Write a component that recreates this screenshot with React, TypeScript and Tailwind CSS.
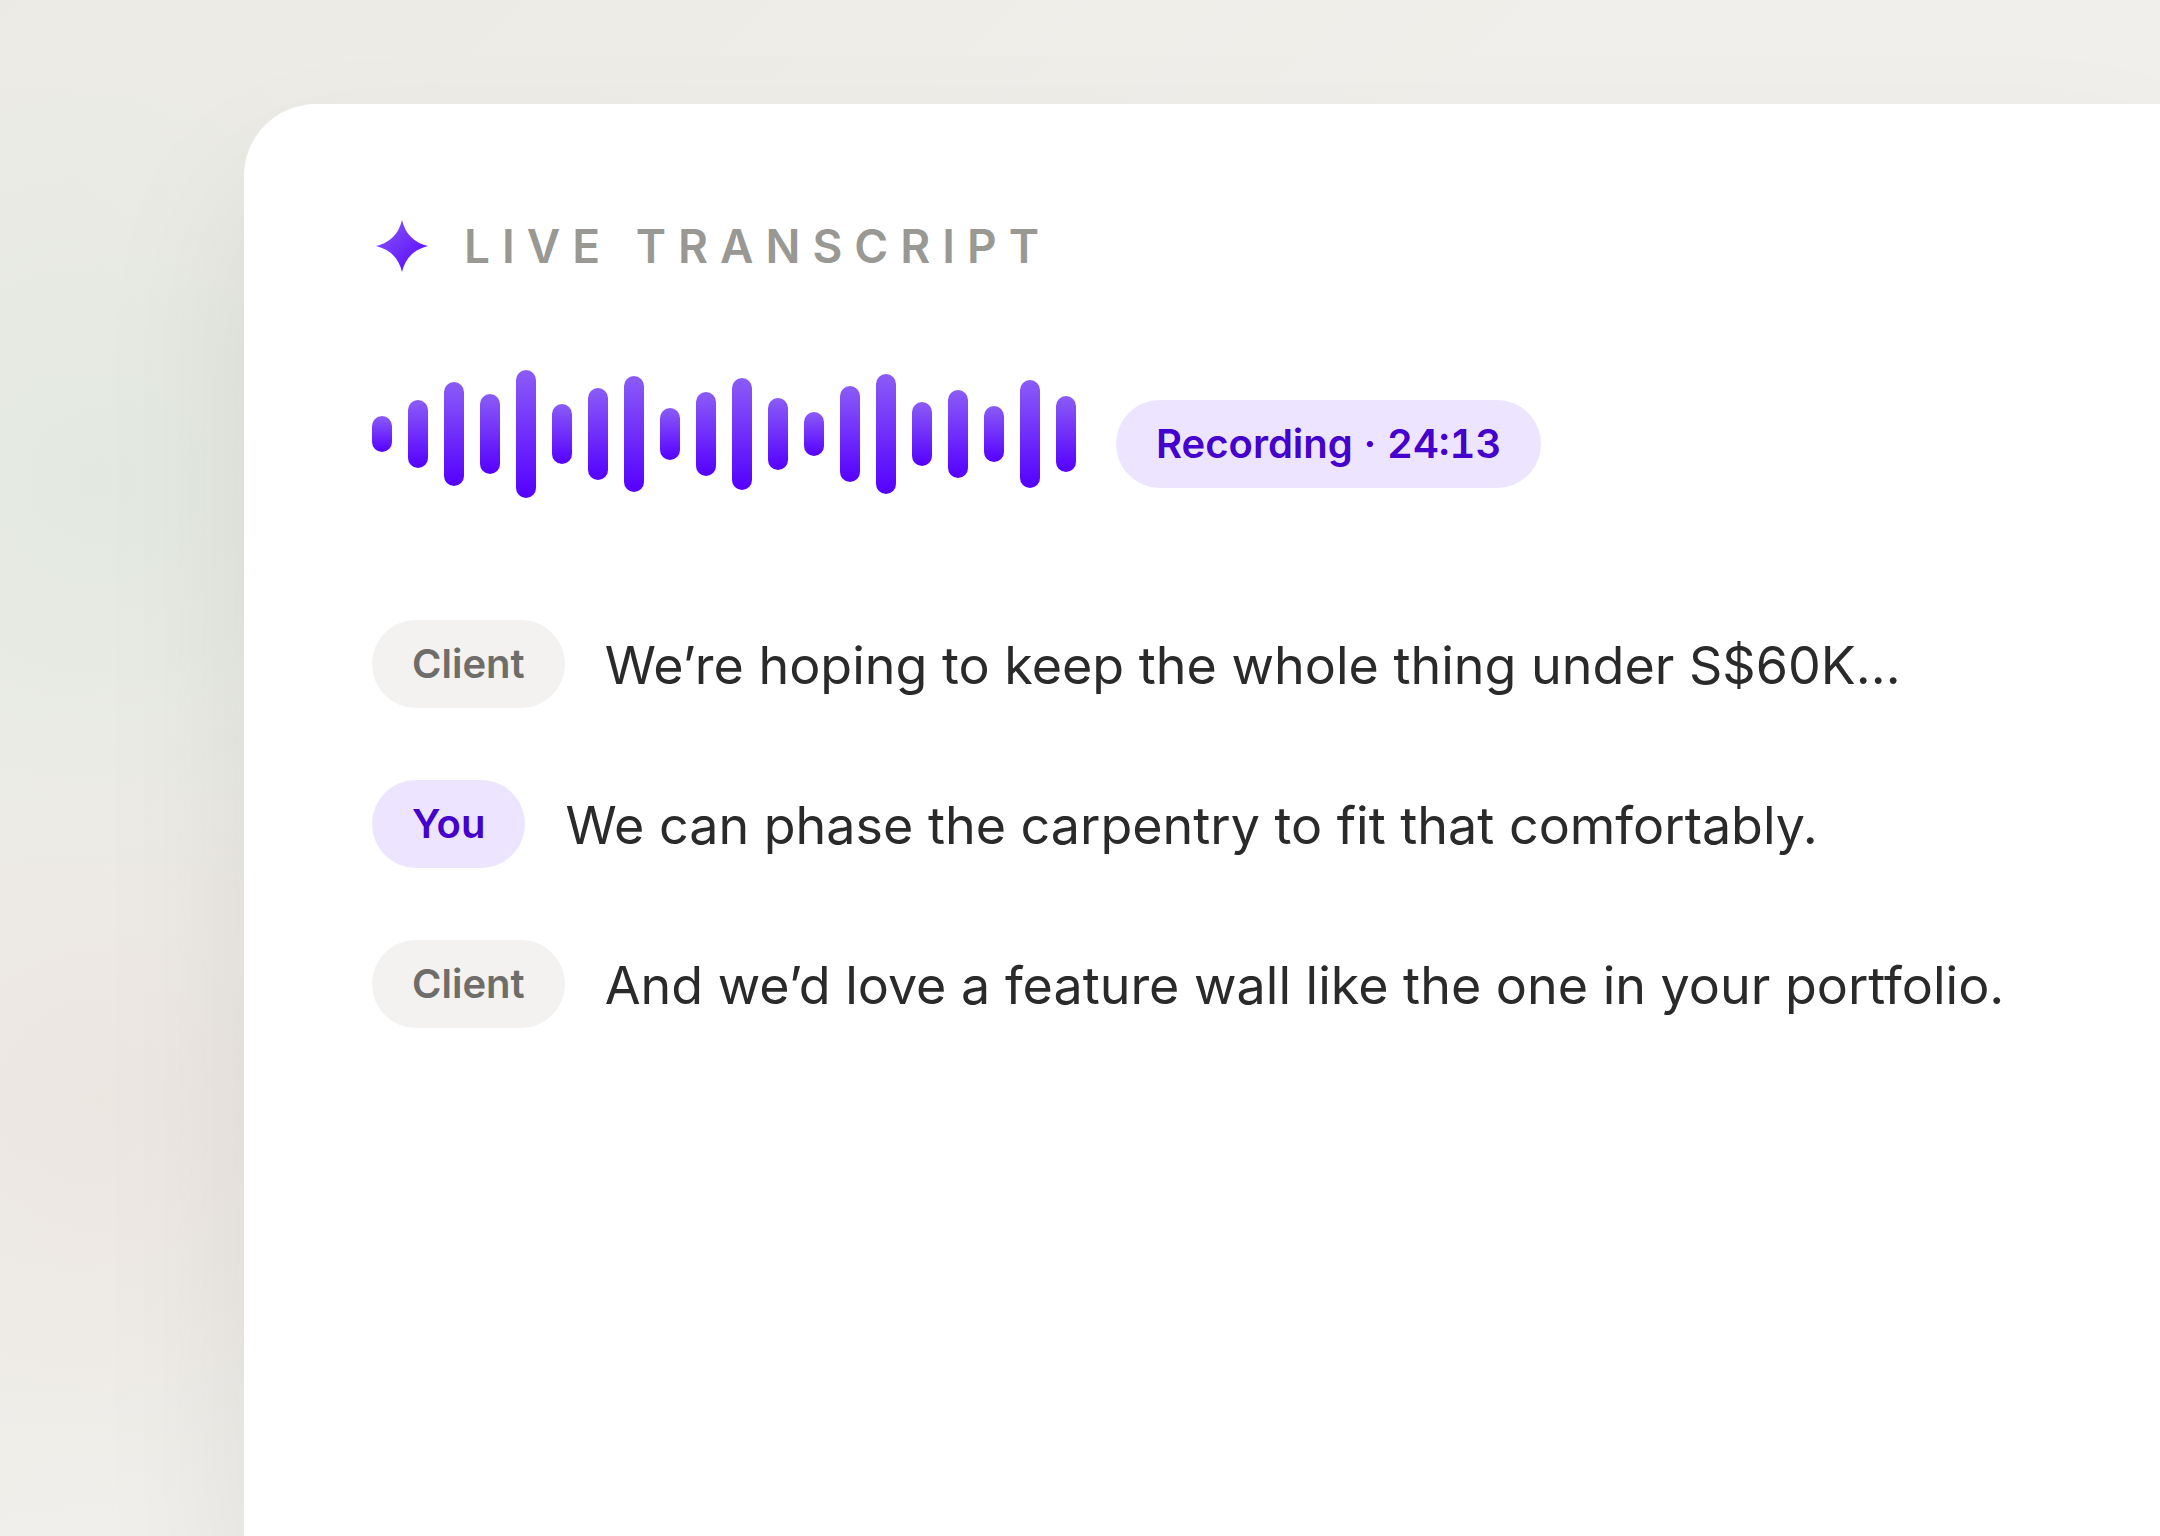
import type { ReactNode } from "react";

const barHeights = [36, 68, 104, 80, 128, 60, 92, 116, 52, 84, 112, 72, 44, 96, 120, 64, 88, 56, 108, 76];

type Speaker = "Client" | "You";

const lines: { speaker: Speaker; text: string }[] = [
  { speaker: "Client", text: "We’re hoping to keep the whole thing under S$60K…" },
  { speaker: "You", text: "We can phase the carpentry to fit that comfortably." },
  { speaker: "Client", text: "And we’d love a feature wall like the one in your portfolio." },
];

const chipStyles: Record<Speaker, string> = {
  Client: "bg-[#f3f2f0] text-[#6e6d69]",
  You: "bg-[#ede5ff] text-[#4400cc]",
};

function Sparkle() {
  return (
    <svg viewBox="0 0 60 60" className="size-[60px] shrink-0" aria-hidden="true">
      <defs>
        <linearGradient id="sparkle" x1="0" y1="0" x2="1" y2="1">
          <stop offset="0" stopColor="#8b5cf6" />
          <stop offset="1" stopColor="#5500ff" />
        </linearGradient>
      </defs>
      <path d="M30 4Q35 25 56 30Q35 35 30 56Q25 35 4 30Q25 25 30 4Z" fill="url(#sparkle)" />
    </svg>
  );
}

function Chip({ className, children }: { className: string; children: ReactNode }) {
  return (
    <span className={`flex h-[88px] shrink-0 items-center rounded-full px-10 text-[40px] font-semibold whitespace-nowrap tabular-nums ${className}`}>
      {children}
    </span>
  );
}

export default function App() {
  return (
    <main className="flex min-h-screen overflow-hidden bg-[radial-gradient(circle_420px_at_100px_480px,#e3e9e0_0%,#e3e9e0a0_40%,#e3e9e030_75%,#e3e9e000_100%),radial-gradient(circle_420px_at_100px_1100px,#ece6e1_0%,#ece6e1a0_40%,#ece6e130_75%,#ece6e100_100%),linear-gradient(135deg,#ebeae5_0%,#f0efeb_45%)] pt-[104px] pl-[244px] font-['Inter',sans-serif]">
      <section className="flex-1 rounded-tl-[72px] bg-white pt-28 pr-20 pl-32 shadow-[0_80px_160px_rgba(30,30,25,0.08)]">
        <header className="flex items-center gap-8">
          <Sparkle />
          <h1 className="text-[46px] leading-[60px] font-semibold tracking-[12px] text-[#999893]">LIVE TRANSCRIPT</h1>
        </header>

        <div className="mt-[94px] flex items-center gap-10">
          <div className="flex h-32 items-center gap-4" role="img" aria-label="Audio waveform">
            {barHeights.map((height, i) => (
              <span key={i} className="w-5 rounded-full bg-[linear-gradient(180deg,#8b5cf6,#5500ff)]" style={{ height }} />
            ))}
          </div>
          <Chip className="mt-5 bg-[#ede5ff] text-[#4400cc]">Recording · 24:13</Chip>
        </div>

        <ul className="mt-[122px] flex flex-col gap-[72px]">
          {lines.map(({ speaker, text }) => (
            <li key={text} className="flex items-center gap-10">
              <Chip className={chipStyles[speaker]}>{speaker}</Chip>
              <p className="pt-1 text-[52px] leading-[72px] text-[#2a2a2a]">{text}</p>
            </li>
          ))}
        </ul>
      </section>
    </main>
  );
}
